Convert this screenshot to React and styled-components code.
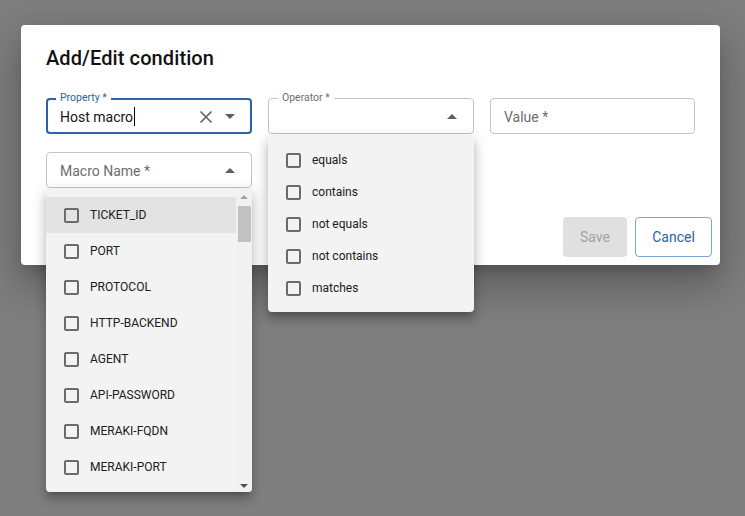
import React from "react";
import styled, { createGlobalStyle, css } from "styled-components";

const GlobalStyle = createGlobalStyle`
  html, body { margin: 0; padding: 0; background: #7f7f7f; }
  body { font-family: Roboto, "Noto Sans", Arial, sans-serif; }
  * { box-sizing: border-box; }
`;

const Page = styled.div`
  width: 745px;
  height: 516px;
  padding: 25px 25px 0 21px;
  overflow: hidden;
`;

const Dialog = styled.div`
  width: 699px;
  height: 240px;
  background: #fff;
  border-radius: 4px;
  box-shadow: 0 11px 15px -7px rgba(0,0,0,.2), 0 24px 38px 3px rgba(0,0,0,.14), 0 9px 46px 8px rgba(0,0,0,.12);
  display: flex;
  flex-direction: column;
`;

const Title = styled.h2`
  margin: 0;
  padding: 17px 25px 0;
  font-size: 20px;
  line-height: 32px;
  font-weight: 500;
  color: #111;
  letter-spacing: 0.1px;
`;

const Content = styled.div`
  padding: 24px 25px 0;
  display: grid;
  grid-template-columns: 206px 206px 205px;
  column-gap: 16px;
  row-gap: 18px;
`;

const Field = styled.div`
  position: relative;
  height: 36px;
  border-radius: 4px;
  border: 1px solid #c4c4c4;
  display: flex;
  align-items: center;
  padding: 1px 13px 0;
  gap: 8px;
  ${(p) =>
    p.$focused &&
    css`
      border: 2px solid #2b62a7;
      padding: 1px 12px 0;
    `}
  ${(p) => p.$raised && css`z-index: 5;`}
`;

const FloatLabel = styled.span`
  position: absolute;
  top: -8px;
  left: 9px;
  padding: 0 4px;
  background: #fff;
  font-size: 10.5px;
  line-height: 13px;
  color: ${(p) => (p.$active ? "#2b62a7" : "#6f6f6f")};
  ${(p) => p.$focused && css`left: 8px; top: -9px;`}
`;

const InputText = styled.span`
  flex: 1;
  font-size: 14px;
  color: ${(p) => (p.$placeholder ? "#6e6e6e" : "#151515")};
  display: flex;
  align-items: center;
  white-space: nowrap;
`;

const Caret = styled.span`
  display: inline-block;
  width: 1px;
  height: 19px;
  background: #000;
  margin-left: 1px;
`;

const IconBox = styled.span`
  width: 16px;
  height: 16px;
  display: flex;
  align-items: center;
  justify-content: center;
  flex: none;
`;

const Menu = styled.div`
  position: absolute;
  left: -1px;
  right: -1px;
  top: ${(p) => p.$top}px;
  background: #f3f3f3;
  border-radius: 0 0 4px 4px;
  box-shadow: 0 5px 5px -3px rgba(0,0,0,.2), 0 8px 10px 1px rgba(0,0,0,.14), 0 3px 14px 2px rgba(0,0,0,.12);
  display: flex;
  ${(p) => p.$height && css`height: ${p.$height}px;`}
`;

const List = styled.ul`
  list-style: none;
  margin: 0;
  padding: 8px 0;
  flex: 1;
  overflow: hidden;
`;

const Item = styled.li`
  height: ${(p) => p.$h}px;
  display: flex;
  align-items: center;
  padding-left: 18px;
  gap: 11px;
  font-size: 12px;
  color: #202020;
  background: ${(p) => (p.$active ? "#e3e3e3" : "transparent")};
  flex: none;
`;

const Check = styled.span`
  width: 15px;
  height: 15px;
  border: 2px solid #6b6b6b;
  border-radius: 2px;
  flex: none;
`;

const ScrollTrack = styled.div`
  width: 16px;
  background: #f1f1f1;
  display: flex;
  flex-direction: column;
  align-items: center;
  padding: 6px 0 4px;
  border-radius: 0 0 4px 0;
`;

const ScrollThumb = styled.div`
  width: 13px;
  height: 36px;
  margin-top: 7px;
  background: #c1c1c1;
`;

const Spacer = styled.div`
  flex: 1;
`;

const Actions = styled.div`
  margin-top: auto;
  padding: 8px;
  display: flex;
  justify-content: flex-end;
  gap: 8px;
`;

const Button = styled.button`
  height: 40px;
  padding: 0 16px;
  border-radius: 4px;
  font-family: Roboto, Arial, sans-serif;
  font-size: 14px;
  ${(p) =>
    p.$variant === "disabled"
      ? css`
          background: #e0e0e0;
          border: none;
          color: #a2a2a2;
          width: 64px;
        `
      : css`
          background: #fff;
          border: 1px solid #7da3d3;
          color: #2b62a7;
          width: 77px;
        `}
`;

const Arrow = ({ up }) => (
  <svg width="10" height="5" viewBox="0 0 10 5">
    <path d={up ? "M0 5 L5 0 L10 5 Z" : "M0 0 L5 5 L10 0 Z"} fill="#5f5f5f" />
  </svg>
);

const Clear = () => (
  <svg width="14" height="14" viewBox="0 0 14 14">
    <path d="M1.5 1.5 L12.5 12.5 M12.5 1.5 L1.5 12.5" stroke="#606060" strokeWidth="1.6" />
  </svg>
);

const ScrollArrow = ({ up, color }) => (
  <svg width="8" height="4" viewBox="0 0 8 4">
    <path d={up ? "M0 4 L4 0 L8 4 Z" : "M0 0 L4 4 L8 0 Z"} fill={color} />
  </svg>
);

const operators = ["equals", "contains", "not equals", "not contains", "matches"];
const macros = [
  "TICKET_ID",
  "PORT",
  "PROTOCOL",
  "HTTP-BACKEND",
  "AGENT",
  "API-PASSWORD",
  "MERAKI-FQDN",
  "MERAKI-PORT",
];

export default function App() {
  return (
    <>
      <GlobalStyle />
      <Page>
        <Dialog>
          <Title>Add/Edit condition</Title>
          <Content>
            <Field $focused>
              <FloatLabel $active $focused>Property *</FloatLabel>
              <InputText>
                Host macro
                <Caret />
              </InputText>
              <IconBox><Clear /></IconBox>
              <IconBox><Arrow /></IconBox>
            </Field>
            <Field $raised>
              <FloatLabel>Operator *</FloatLabel>
              <InputText />
              <IconBox><Arrow up /></IconBox>
              <Menu $top={37}>
                <List>
                  {operators.map((o) => (
                    <Item key={o} $h={32}>
                      <Check />
                      {o}
                    </Item>
                  ))}
                </List>
              </Menu>
            </Field>
            <Field>
              <InputText $placeholder>Value *</InputText>
            </Field>
            <Field $raised>
              <InputText $placeholder>Macro Name *</InputText>
              <IconBox><Arrow up /></IconBox>
              <Menu $top={36} $height={303}>
                <List>
                  {macros.map((m, i) => (
                    <Item key={m} $h={36} $active={i === 0}>
                      <Check />
                      {m}
                    </Item>
                  ))}
                </List>
                <ScrollTrack>
                  <ScrollArrow up color="#a3a3a3" />
                  <ScrollThumb />
                  <Spacer />
                  <ScrollArrow color="#505050" />
                </ScrollTrack>
              </Menu>
            </Field>
          </Content>
          <Actions>
            <Button $variant="disabled" disabled>Save</Button>
            <Button>Cancel</Button>
          </Actions>
        </Dialog>
      </Page>
    </>
  );
}
